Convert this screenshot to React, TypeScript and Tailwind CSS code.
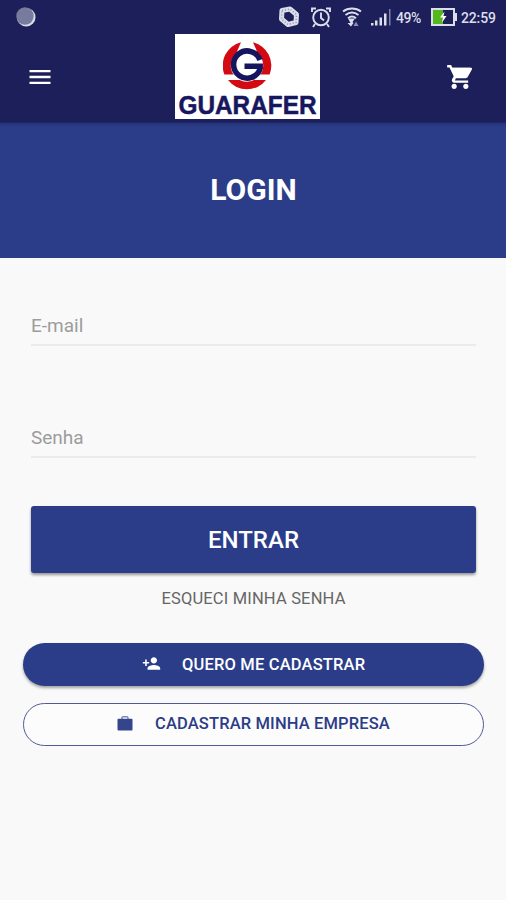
import { useState } from "react";
import { MdMenu, MdPersonAdd } from "react-icons/md";

function StatusBar() {
  return (
    <div className="flex h-[34px] items-center pl-4 pr-[10px] text-[#dcdeec]">
      <svg width="20" height="20" viewBox="0 0 20 20">
        <circle cx="10.200" cy="10.200" r="9.300" fill="#d9dbe6" />
        <circle cx="9" cy="9" r="8.700" fill="#777b9e" />
      </svg>

      <div className="ml-auto flex items-center">
        {/* Data saver ring */}
        <svg className="mr-[10px]" width="24" height="22" viewBox="0 0 24 22" fill="none" stroke="currentColor">
          <path d="M5 4.500L13 3L19.500 8.500L19 16.500L11 18.500L4.500 13z" strokeWidth="5" strokeLinejoin="round" />
          <path
            d="M5 4.500L13 3L19.500 8.500L19 16.500L11 18.500L4.500 13z"
            stroke="#1c1f59"
            strokeWidth="1.500"
            strokeDasharray="1 2"
            opacity="0.4"
          />
        </svg>
        {/* Alarm */}
        <svg className="mr-[11px]" width="20" height="21" viewBox="0 0 20 21" fill="none" stroke="currentColor" strokeWidth="1.900">
          <circle cx="10" cy="10.500" r="7.800" />
          <path d="M10 5.500v5.500l3 2.500M1 5V1.500h4M15 1.500h4V5M4 17l-2 3M16 17l2 3" />
        </svg>
        {/* Wifi */}
        <svg className="mr-[9px]" width="20" height="20" viewBox="0 0 20 20" fill="none" stroke="currentColor" strokeWidth="1.900">
          <path d="M1 4.500c5-4 13-4 18 0M3.500 8c4-3 9-3 13 0M6 11.200c2.500-2 5.500-2 8 0" />
          <path d="M6 11.500h7l-2.500 3.500 1 1-2.500 3.500-3.500-3.500h3z" fill="currentColor" stroke="none" />
          <path d="M11.500 19l2.500-4.500 2.500 4.500z" fill="#8b8eb2" stroke="none" />
        </svg>
        {/* Signal */}
        <svg className="mr-[5px]" width="20" height="18" viewBox="0 0 20 18" fill="currentColor">
          <path d="M0 15h2.500v2.500H0zM4 12.500h2.500v5H4zM8.500 9.500H11v8H8.500zM13 5.500h2.500v12H13z" />
          <path d="M18 1h1.500v16.500H18z" fill="#7f82aa" />
        </svg>
        <span className="w-[26px] whitespace-nowrap pt-[2px] text-[14px] font-medium tracking-[-0.4px]">49%</span>
        {/* Battery */}
        <svg className="ml-[9px] mr-[4px]" width="26" height="18" viewBox="0 0 26 18">
          <path d="M1 1h22v16H1z" fill="none" stroke="#dcdeec" strokeWidth="2" />
          <path d="M2 2h10v14H2z" fill="#55b81c" />
          <path d="M24 5h2v8h-2z" fill="#dcdeec" />
          <path d="M13.500 3.500L9 9.500h3l-1 5 4.500-6.500h-3z" fill="#fff" />
        </svg>
        <span className="w-[35px] whitespace-nowrap pt-[2px] text-[14px] font-medium tracking-[-0.15px]">22:59</span>
      </div>
    </div>
  );
}

function Logo() {
  return (
    <div className="flex h-[85px] w-[145px] flex-col items-center bg-white pt-[7px]">
      <svg width="50" height="49" viewBox="-24 -24.500 50 49">
        <g fill="#d40a12">
          <path d="M-6-23.200A24 24 0 0 0-22.600 9H-10V-14z" />
          <path d="M6-23.200A24 24 0 0 1 22.600 9H10V-14z" />
          <path d="M-19 14.500A24 24 0 0 0 19 14.500H8L0 10L-8 14.500z" />
        </g>
        <circle r="16.200" fill="#fff" />
        <path
          d="M13-5.500A13.600 13.600 0 1 0 13.200 3V.8H-2.500"
          fill="none"
          stroke="#15155f"
          strokeWidth="5.500"
        />
      </svg>
      <svg className="-mt-[3px]" width="145" height="32" viewBox="0 0 145 32">
        <text
          x="3.500"
          y="26.500"
          textLength="138"
          lengthAdjust="spacingAndGlyphs"
          strokeWidth="0.500"
          className="fill-[#17175f] stroke-[#17175f] font-['Liberation_Sans'] text-[25px] font-bold"
        >
          GUARAFER
        </text>
      </svg>
    </div>
  );
}

function CartIcon() {
  return (
    <svg width="28" height="28" viewBox="0 0 24 24" fill="currentColor">
      <circle cx="7" cy="20" r="2.200" />
      <circle cx="17" cy="20" r="2.200" />
      <path d="M1 1.800h3.400l1 2.200H21.500c.7 0 1.100.8.8 1.400l-3.700 6.700c-.35.65-1 1-1.700 1H8.500l-.9 1.800H19v2H7c-1.500 0-2.500-1.600-1.800-3l1.400-2.500L3 3.800H1z" />
      <path d="M5 4h16l-4 8H8z" />
    </svg>
  );
}

function Field({ label, type }: { label: string; type: string }) {
  const [value, setValue] = useState("");

  return (
    <input
      type={type}
      value={value}
      placeholder={label}
      onChange={(e) => setValue(e.target.value)}
      className="h-[42px] w-full border-b-2 border-[#ebebeb] bg-transparent pt-[3px] text-[19px] text-[#444] outline-none placeholder:text-[#9c9c9c]"
    />
  );
}

export default function App() {
  return (
    <div className="min-h-[900px] w-full bg-[#f9f9f9] font-[Roboto,sans-serif]">
      <header className="h-[123px] border-b border-[#1f2763] bg-[#1c1f59]">
        <StatusBar />
        <div className="grid grid-cols-[175px_145px_1fr] items-center">
          <button aria-label="Menu" className="ml-[26px] justify-self-start pt-px text-white">
            <MdMenu className="size-[28px]" />
          </button>
          <Logo />
          <button aria-label="Carrinho" className="mr-[32px] justify-self-end text-white">
            <CartIcon />
          </button>
        </div>
      </header>

      <section className="flex h-[135px] items-center justify-center bg-[#2b3d88] bg-linear-to-b from-[#24347b] to-[#2b3d88] to-[4px] pb-[2px]">
        <h1 className="pl-px text-[30px] font-bold leading-none text-white">LOGIN</h1>
      </section>

      <form className="pl-[31px] pr-[30px] pt-[46px]" onSubmit={(e) => e.preventDefault()}>
        <Field label="E-mail" type="email" />
        <div className="mt-[70px]">
          <Field label="Senha" type="password" />
        </div>
        <button className="mt-[48px] h-[67px] w-full rounded-[3px] bg-[#2b3d88] text-[24px] font-medium text-white shadow-[0_2px_3px_rgba(0,0,0,0.4)]">
          ENTRAR
        </button>
        <button type="button" className="mt-[14px] block h-[24px] w-full text-[16.500px] tracking-[0.17px] text-[#666]">
          ESQUECI MINHA SENHA
        </button>
      </form>

      <div className="flex flex-col gap-[17px] pl-[23px] pr-[22px] pt-[32px]">
        <button className="flex h-[43px] items-center rounded-full bg-[#2b3d88] pl-[119px] text-[16.500px] font-medium tracking-[0.17px] text-white shadow-[0_2px_3px_rgba(0,0,0,0.35)]">
          <MdPersonAdd className="mb-[2px] mr-[21px] size-[19px]" />
          <span className="pt-px">QUERO ME CADASTRAR</span>
        </button>
        <button className="flex h-[43px] items-center rounded-full border border-[#52599a] bg-[#fcfcfc] pl-[93px] text-[16.500px] text-[#2b3d88]">
          <svg className="mb-[3px] mr-[22px]" width="16" height="16" viewBox="0 0 16 16">
            <path d="M5 4.500V2.800Q5 1.700 6 1.700H10Q11 1.700 11 2.800V4.500" fill="none" stroke="#7d87b5" strokeWidth="1.400" />
            <rect x="0.500" y="3.800" width="15" height="11.700" rx="1" fill="#34458e" />
          </svg>
          <span className="font-medium tracking-[0.14px]">CADASTRAR MINHA EMPRESA</span>
        </button>
      </div>
    </div>
  );
}
